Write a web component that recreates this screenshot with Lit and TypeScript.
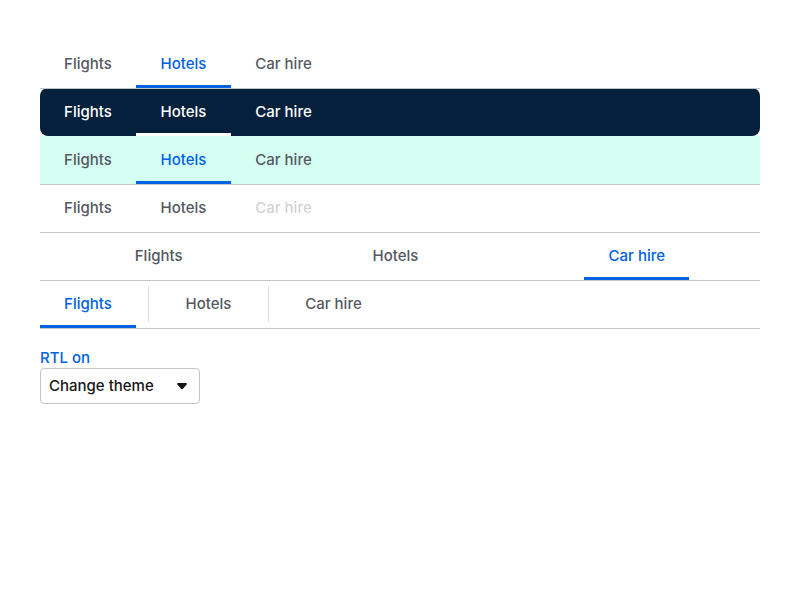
import { LitElement, html, css, nothing } from "lit";
import { customElement, property } from "lit/decorators.js";
import { classMap } from "lit/directives/class-map.js";

const TABS = [
  { name: "Flights", size: "s1" },
  { name: "Hotels", size: "s2" },
  { name: "Car hire", size: "s3" },
];

@customElement("tab-nav")
class TabNav extends LitElement {
  @property() variant = "default";
  @property() selected = "";
  @property() disabledTab = "";

  static styles = css`
    :host {
      display: block;
    }
    .bar {
      position: relative;
      display: flex;
      height: 48px;
      box-shadow: 0 1px #c1c7c9;
      color: #545860;
    }
    .dark {
      position: static;
      border-radius: 8px;
      background: #05203c;
      box-shadow: none;
      color: #fff;
    }
    .mint {
      background: #d4fff2;
    }
    .spaced {
      justify-content: space-around;
    }
    .tab {
      box-sizing: border-box;
      padding: 3px 0 0;
      border: 0;
      border-bottom: 3px solid transparent;
      background: none;
      color: inherit;
      font: 500 15px/24px Inter, sans-serif;
      white-space: nowrap;
      cursor: pointer;
    }
    .s1 {
      width: 96px;
    }
    .s2 {
      width: 95px;
    }
    .s3 {
      width: 105px;
    }
    .selected {
      border-color: #0062e3;
      color: #0062e3;
    }
    .dark .selected {
      border-color: #fff;
      color: #fff;
    }
    .tab:disabled {
      color: rgba(0, 0, 0, 0.2);
      cursor: default;
    }
    .divider {
      width: 1px;
      height: 36px;
      margin: 6px 12px;
      background: #dddde5;
    }
  `;

  render() {
    return html`<nav class="bar ${this.variant}">
      ${TABS.map(
        (t, i) => html`${this.variant === "divided" && i > 0
            ? html`<span class="divider"></span>`
            : nothing}<button
            class=${classMap({ tab: true, [t.size]: true, selected: t.name === this.selected })}
            ?disabled=${t.name === this.disabledTab}
          >${t.name}</button>`
      )}
    </nav>`;
  }
}

@customElement("app-root")
class AppRoot extends LitElement {
  static styles = css`
    :host {
      display: block;
      padding: 40px;
    }
    .rtl {
      display: block;
      margin-top: 20px;
      padding: 0;
      border: 0;
      background: none;
      color: #0062e3;
      font: 500 15px/20px Inter, sans-serif;
      cursor: pointer;
    }
    .picker {
      position: relative;
      width: 160px;
    }
    .select {
      display: block;
      box-sizing: border-box;
      width: 100%;
      height: 36px;
      padding: 0 32px 0 8px;
      border: 1px solid #c1c7c9;
      border-radius: 4px;
      appearance: none;
      background: #fff;
      color: #161616;
      font: 500 15px/20px Inter, sans-serif;
    }
    .arrow {
      position: absolute;
      top: 12px;
      right: 12px;
      width: 12px;
      height: 12px;
      fill: #161616;
      pointer-events: none;
    }
  `;

  render() {
    return html`
      <tab-nav selected="Hotels"></tab-nav>
      <tab-nav variant="dark" selected="Hotels"></tab-nav>
      <tab-nav variant="mint" selected="Hotels"></tab-nav>
      <tab-nav .disabledTab=${"Car hire"}></tab-nav>
      <tab-nav variant="spaced" selected="Car hire"></tab-nav>
      <tab-nav variant="divided" selected="Flights"></tab-nav>
      <button class="rtl">RTL on</button>
      <div class="picker">
        <select class="select" aria-label="Change theme">
          <option>Change theme</option>
        </select>
        <svg class="arrow" viewBox="0 0 12 12" aria-hidden="true">
          <path d="M2 3h8c.9 0 1.2.9.7 1.500L7 8.700c-.5.6-1.500.6-2 0L1.300 4.500C.8 3.900 1.100 3 2 3z" />
        </svg>
      </div>
    `;
  }
}
